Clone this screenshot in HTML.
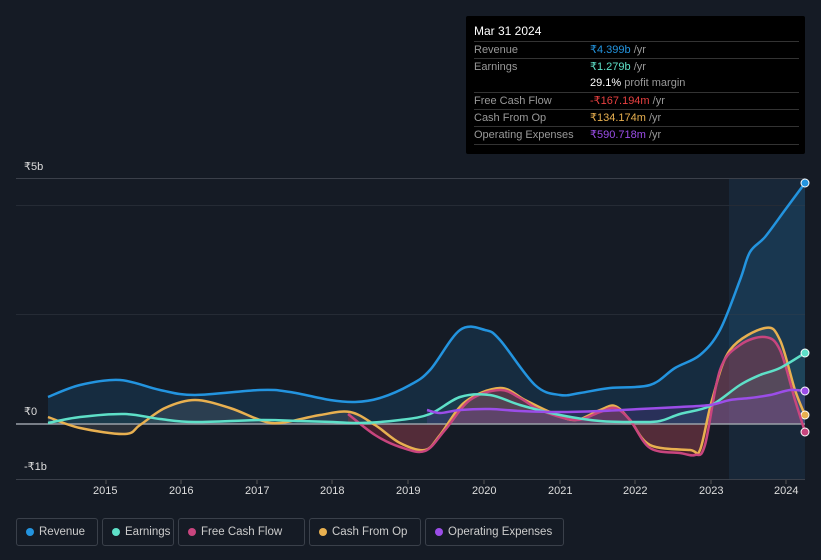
<!DOCTYPE html>
<html><head><meta charset="utf-8"><style>
body{margin:0;width:821px;height:560px;background:#151b25;font-family:"Liberation Sans",sans-serif;overflow:hidden;position:relative}
.tt{position:absolute;left:466px;top:16px;width:339px;height:138px;background:#000;border-radius:2px}
.tt .h{position:absolute;left:8px;top:8px;color:#fff;font-size:12px}
.row{position:absolute;left:8px;width:325px;font-size:11px;color:#999;border-top:1px solid #333;height:17px;line-height:17px}
.row span{position:absolute;left:116px}
.leg{position:absolute;top:518px;height:28px;border:1px solid #3a404a;border-radius:3px;font-size:11.5px;color:#ccc;line-height:26px;box-sizing:border-box;padding-left:22px;white-space:nowrap}
.leg i{position:absolute;left:9px;top:9px;width:8px;height:8px;border-radius:50%}
.ax{position:absolute;font-size:11px;color:#ddd}
</style></head><body>
<svg width="821" height="560" style="position:absolute;left:0;top:0">
<rect x="729" y="178" width="76" height="301" fill="#1a2c40" opacity="0.7"/>
<line x1="16" y1="178.5" x2="805" y2="178.5" stroke="#3b404a"/>
<line x1="16" y1="205.5" x2="805" y2="205.5" stroke="#252b35"/>
<line x1="16" y1="314.5" x2="805" y2="314.5" stroke="#252b35"/>
<line x1="16" y1="479.5" x2="805" y2="479.5" stroke="#3b404a"/>
<g id="g"></g>
<line x1="16" y1="424" x2="805" y2="424" stroke="#9aa0a8" stroke-width="1.5"/>
<g id="g2"></g>
<g stroke="#555" ><line x1="106" y1="480" x2="106" y2="484"/><line x1="181" y1="480" x2="181" y2="484"/><line x1="257" y1="480" x2="257" y2="484"/><line x1="332" y1="480" x2="332" y2="484"/><line x1="408" y1="480" x2="408" y2="484"/><line x1="484" y1="480" x2="484" y2="484"/><line x1="560" y1="480" x2="560" y2="484"/><line x1="635" y1="480" x2="635" y2="484"/><line x1="711" y1="480" x2="711" y2="484"/><line x1="786" y1="480" x2="786" y2="484"/></g>
</svg>
<div class="ax" style="left:24px;top:160px">₹5b</div>
<div class="ax" style="left:24px;top:405px">₹0</div>
<div class="ax" style="left:24px;top:460px">-₹1b</div>
<div class="ax" style="left:93px;top:485px">2015</div><div class="ax" style="left:169px;top:485px">2016</div><div class="ax" style="left:245px;top:485px">2017</div><div class="ax" style="left:320px;top:485px">2018</div><div class="ax" style="left:396px;top:485px">2019</div><div class="ax" style="left:472px;top:485px">2020</div><div class="ax" style="left:548px;top:485px">2021</div><div class="ax" style="left:623px;top:485px">2022</div><div class="ax" style="left:699px;top:485px">2023</div><div class="ax" style="left:774px;top:485px">2024</div>
<div class="tt"><div class="h">Mar 31 2024</div>
<div class="row" style="top:25px">Revenue<span style="color:#2394df">₹4.399b <span style="position:static;color:#999">/yr</span></span></div>
<div class="row" style="top:42px">Earnings<span style="color:#5ee0c8">₹1.279b <span style="position:static;color:#999">/yr</span></span></div>
<div class="row" style="top:59px;border-top:none"><span style="color:#fff">29.1% <span style="position:static;color:#999">profit margin</span></span></div>
<div class="row" style="top:76px">Free Cash Flow<span style="color:#e84040">-₹167.194m <span style="position:static;color:#999">/yr</span></span></div>
<div class="row" style="top:93px">Cash From Op<span style="color:#e8b050">₹134.174m <span style="position:static;color:#999">/yr</span></span></div>
<div class="row" style="top:110px;border-bottom:1px solid #333">Operating Expenses<span style="color:#9b4de8">₹590.718m <span style="position:static;color:#999">/yr</span></span></div>
</div>
<div class="leg" style="left:16px;width:82px"><i style="background:#2394df"></i>Revenue</div>
<div class="leg" style="left:102px;width:72px"><i style="background:#5ee0c8"></i>Earnings</div>
<div class="leg" style="left:178px;width:127px"><i style="background:#c8457e"></i>Free Cash Flow</div>
<div class="leg" style="left:309px;width:112px"><i style="background:#e8b050"></i>Cash From Op</div>
<div class="leg" style="left:425px;width:139px"><i style="background:#9b4de8"></i>Operating Expenses</div>
<script>
function cr(p){let d="M"+p[0][0]+","+p[0][1];for(let i=0;i<p.length-1;i++){const a=p[i-1]||p[i],b=p[i],c=p[i+1],e=p[i+2]||c;d+=" C"+(b[0]+(c[0]-a[0])/6)+","+(b[1]+(c[1]-a[1])/6)+" "+(c[0]-(e[0]-b[0])/6)+","+(c[1]-(e[1]-b[1])/6)+" "+c[0]+","+c[1];}return d;}
const S={
rev:[[48,397],[80,385],[120,380],[160,390],[195,395],[260,390],[290,392],[330,400],[355,402],[380,398],[410,385],[430,370],[460,330],[485,330],[500,340],[535,385],[560,395],[580,393],[610,388],[650,385],[675,368],[700,355],[720,330],[740,280],[750,252],[765,237],[785,210],[805,183]],
earn:[[48,423],[80,417],[125,414],[160,419],[195,422],[260,420],[300,421],[333,422],[360,423],[400,420],[430,414],[460,397],[490,395],[520,405],[560,415],[600,421],[640,422],[660,421],[680,414],[710,406],[740,385],[760,375],[780,368],[805,353]],
fcf:[[348,414],[375,435],[400,447],[425,451],[445,430],[470,400],[500,390],[520,398],[540,410],[575,420],[600,412],[615,408],[630,420],[650,448],[680,453],[695,455],[705,445],[720,370],[740,345],[765,337],[780,350],[795,400],[805,432]],
cfo:[[48,417],[80,428],[125,434],[140,425],[165,408],[195,400],[230,408],[260,420],[280,423],[320,415],[350,412],[375,425],[400,443],[425,450],[440,435],[465,402],[500,388],[525,400],[550,412],[575,420],[600,410],[615,406],[630,420],[650,445],[690,450],[700,450],[712,400],[730,350],[765,328],[780,340],[795,390],[805,415]],
opx:[[427,410],[440,413],[460,410],[490,409],[520,411],[560,412],[600,411],[640,409],[680,407],[710,405],[730,400],[750,398],[770,395],[790,390],[805,391]]};
const C={rev:"#2394df",earn:"#5ee0c8",fcf:"#c8457e",cfo:"#e8b050",opx:"#9b4de8"};
const F={rev:"rgba(35,148,223,0.15)",earn:"rgba(94,224,200,0.08)",fcf:"rgba(160,40,60,0.35)",cfo:"rgba(200,200,200,0.12)",opx:"rgba(155,77,232,0.15)"};
let g="",g2="";
for(const k of ["rev","cfo","fcf","earn","opx"]){const p=S[k];const d=cr(p);
g+=`<path d="${d} L${p[p.length-1][0]},424 L${p[0][0]},424Z" fill="${F[k]}"/>`;
g2+=`<path d="${d}" fill="none" stroke="${C[k]}" stroke-width="2.5"/>`;
const l=p[p.length-1];g2+=`<circle cx="${l[0]}" cy="${l[1]}" r="4" fill="${C[k]}" stroke="#fff" stroke-width="1"/>`;}
document.getElementById("g").innerHTML=g;document.getElementById("g2").innerHTML=g2;
</script>
</body></html>
